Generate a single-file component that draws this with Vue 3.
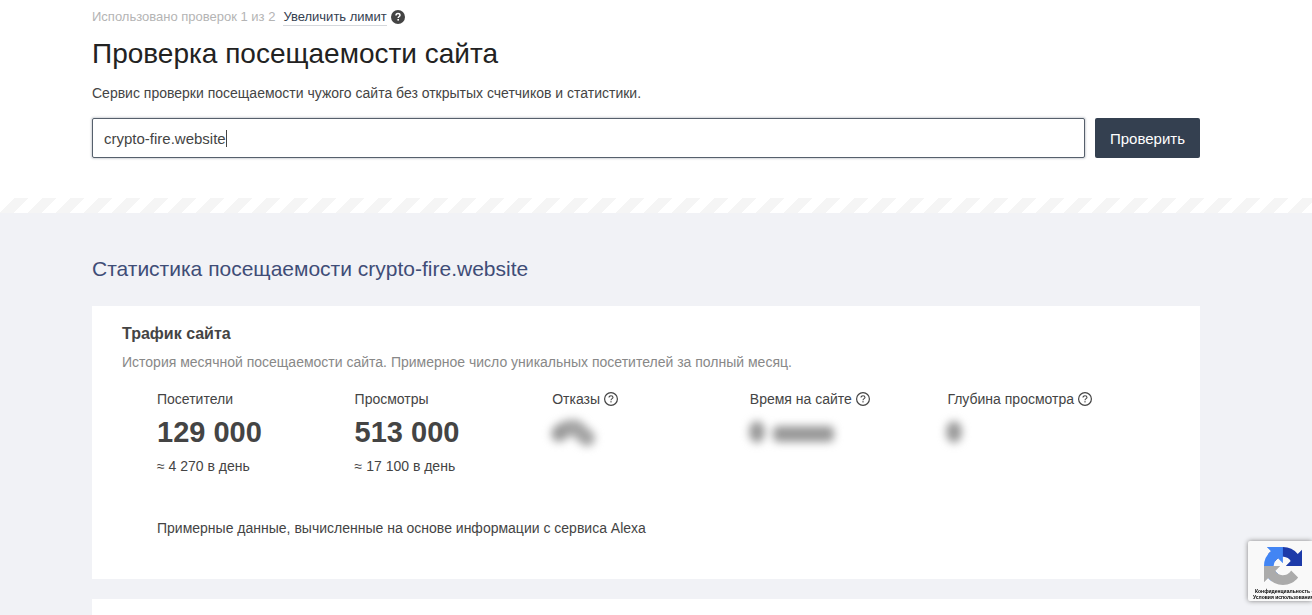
<script setup>
import { ref, onMounted } from 'vue'

const domain = ref('crypto-fire.website')
const checked = ref('crypto-fire.website')
const input = ref(null)

const stats = [
  { label: 'Посетители', value: '129 000', perDay: '≈ 4 270 в день' },
  { label: 'Просмотры', value: '513 000', perDay: '≈ 17 100 в день' },
  { label: 'Отказы', hidden: 'percent' },
  { label: 'Время на сайте', hidden: 'time' },
  { label: 'Глубина просмотра', hidden: 'depth' }
]

const check = () => {
  checked.value = domain.value
}

onMounted(() => {
  input.value.focus()
})
</script>

<template>
  <div class="page">
    <header class="top">
      <div class="limit">
        <span>Использовано проверок 1 из 2</span>
        <a href="#" class="limit-link">Увеличить лимит</a>
        <svg class="limit-help" viewBox="0 0 14 14" aria-hidden="true">
          <circle cx="7" cy="7" r="7" fill="#444" />
          <path d="M5 5.5C5 4.3 5.8 3.6 7 3.6S9 4.3 9 5.3C9 6.5 7.2 6.5 7.2 8" fill="none" stroke="#fff" stroke-width="1.5" />
          <rect x="6.4" y="9" width="1.6" height="1.6" fill="#fff" />
        </svg>
      </div>
      <h1>Проверка посещаемости сайта</h1>
      <p class="lead">Сервис проверки посещаемости чужого сайта без открытых счетчиков и статистики.</p>
      <form class="search" @submit.prevent="check">
        <div class="field">
          <input ref="input" v-model="domain" type="text" aria-label="Адрес сайта" spellcheck="false" />
          <i class="caret"></i>
        </div>
        <button type="submit">Проверить</button>
      </form>
    </header>
    <div class="stripes"></div>

    <main class="results">
      <h2>Статистика посещаемости {{ checked }}</h2>
      <section class="card">
        <h3>Трафик сайта</h3>
        <p class="hint">История месячной посещаемости сайта. Примерное число уникальных посетителей за полный месяц.</p>
        <div class="stats">
          <div v-for="item in stats" :key="item.label" class="stat">
            <div class="stat-label">
              <span>{{ item.label }}</span>
              <svg v-if="item.hidden" class="help" viewBox="0 0 14 14" aria-hidden="true">
                <circle cx="7" cy="7" r="6.4" fill="none" stroke="#444" stroke-width="1.2" />
                <path d="M5 5.6C5 4.4 5.9 3.8 7 3.8S9 4.4 9 5.4C9 6.6 7 6.7 7 8.2" fill="none" stroke="#444" stroke-width="1.1" />
                <rect x="6.4" y="9.2" width="1.2" height="1.2" fill="#444" />
              </svg>
            </div>
            <template v-if="!item.hidden">
              <div class="stat-value">{{ item.value }}</div>
              <div class="stat-day">{{ item.perDay }}</div>
            </template>
            <svg v-else class="blurred" viewBox="0 0 100 40" aria-hidden="true">
              <template v-if="item.hidden === 'percent'">
                <path d="M7 21Q15 13 24 15L35 25" />
                <ellipse cx="8" cy="19" rx="7" ry="8" />
              </template>
              <template v-else>
                <ellipse cx="7" cy="19" rx="8" ry="11" />
                <rect v-if="item.hidden === 'time'" x="23" y="13" width="61" height="16" rx="5" />
              </template>
            </svg>
          </div>
        </div>
        <p class="note">Примерные данные, вычисленные на основе информации с сервиса Alexa</p>
      </section>
      <section class="card card-next"></section>
    </main>

    <aside class="captcha">
      <svg class="captcha-logo" viewBox="0 0 64 64" aria-hidden="true">
        <path d="M64 31.955a33.3 33.3 0 0 0-.02-1.37V4.687l-7.16 7.16A31.9 31.9 0 0 0 32.05.098c-10.4 0-19.64 4.957-25.48 12.635l11.737 11.86a15.55 15.55 0 0 1 4.754-5.334c2.05-1.6 4.952-2.906 8.968-2.906.485 0 .86.057 1.135.163 4.976.393 9.288 3.14 11.828 7.124l-8.307 8.307L64 31.953" fill="#1c3aa9" />
        <path d="M31.862.094a33 33 0 0 0-1.37.024H4.594l7.16 7.16A31.9 31.9 0 0 0 .005 32.05c0 10.4 4.957 19.64 12.635 25.48l11.86-11.737a15.55 15.55 0 0 1-5.334-4.754c-1.6-2.05-2.906-4.952-2.906-8.968 0-.485.057-.86.163-1.135.393-4.976 3.14-9.288 7.124-11.828l8.307 8.307L31.86.097" fill="#4285f4" />
        <path d="M.001 32.045c.001.46.01.92.024 1.37v25.898l7.16-7.16A31.9 31.9 0 0 0 31.957 63.9c10.4 0 19.64-4.957 25.48-12.635L45.7 39.407a15.55 15.55 0 0 1-4.754 5.334c-2.05 1.6-4.952 2.906-8.968 2.906-.485 0-.86-.057-1.135-.163-4.976-.393-9.288-3.14-11.828-7.124l8.307-8.307L.004 32.046" fill="#ababab" />
      </svg>
      <div class="captcha-links">
        <span><a href="#">Конфиденциальность</a> -</span>
        <a href="#">Условия использования</a>
      </div>
    </aside>
  </div>
</template>

<style>
body {
  background: #f1f2f6;
}
</style>

<style scoped>
.page {
  font-family: "Liberation Sans", Arial, sans-serif;
  font-size: 14px;
  line-height: 20px;
  color: #444;
}

h1, h2, h3, p {
  margin: 0;
}

.top {
  padding: 9px 112px 40px 92px;
  background: #fff;
}

.limit {
  display: flex;
  align-items: flex-start;
  height: 17px;
  font-size: 13px;
  line-height: 16px;
  color: #b4b4b4;
}

.limit-link {
  margin: 0 4px 0 8px;
  color: #344050;
  text-decoration: none;
  border-bottom: 1px solid #d5d8dc;
}

.limit-help {
  width: 14px;
  height: 14px;
  margin-top: 1px;
}

h1 {
  margin-top: 8px;
  font-size: 28px;
  line-height: 40px;
  font-weight: 400;
  color: #222;
}

.lead {
  margin-top: 9px;
}

.search {
  display: flex;
  gap: 10px;
  margin-top: 15px;
}

.field {
  position: relative;
  flex: 1;
  min-width: 0;
}

.field input {
  display: block;
  width: 100%;
  height: 40px;
  box-sizing: border-box;
  padding: 0 11px;
  border: 1px solid #56606c;
  border-radius: 2px;
  box-shadow: 0 0 2px 1px #d3d6da;
  outline: none;
  font: inherit;
  font-size: 15px;
  color: #444;
  caret-color: transparent;
}

.caret {
  position: absolute;
  top: 12px;
  left: 134px;
  width: 1px;
  height: 17px;
  background: #444;
}

.search button {
  padding: 2px 15px 0;
  border: 0;
  border-radius: 2px;
  background: #344050;
  font: inherit;
  font-size: 15px;
  color: #fff;
  cursor: pointer;
}

.stripes {
  height: 15px;
  background: linear-gradient(135deg, #fff 25%, #f5f5f5 25%, #f5f5f5 50%, #fff 50%, #fff 75%, #f5f5f5 75%) 0 0 / 28px 28px;
}

.results {
  padding: 42px 112px 0 92px;
}

h2 {
  margin-bottom: 23px;
  font-size: 21px;
  line-height: 28px;
  font-weight: 400;
  color: #3f4d77;
}

.card {
  margin-bottom: 20px;
  padding: 18px 30px 41px;
  background: #fff;
}

.card-next {
  margin-bottom: 0;
  padding: 8px 30px;
}

h3 {
  font-size: 16px;
  line-height: 20px;
}

.hint {
  margin-top: 8px;
  color: #888;
}

.stats {
  display: grid;
  grid-template-columns: repeat(5, 1fr);
  margin: 17px 25px 0 35px;
}

.stat-label {
  display: flex;
  align-items: center;
  gap: 4px;
}

.help {
  width: 14px;
  height: 14px;
}

.stat-value {
  margin-top: 5px;
  font-size: 29px;
  line-height: 36px;
  font-weight: 700;
}

.stat-day {
  margin-top: 6px;
}

.blurred {
  display: block;
  width: 100px;
  height: 40px;
  margin-top: 4px;
  overflow: visible;
  filter: blur(4px);
  fill: #999;
}

.blurred path {
  fill: none;
  stroke: #a4a4a4;
  stroke-width: 16px;
  stroke-linecap: round;
}

.note {
  margin: 42px 35px 0;
}

.captcha {
  position: fixed;
  right: 0;
  bottom: 14px;
  width: 64px;
  height: 60px;
  box-sizing: border-box;
  padding-top: 6px;
  overflow: hidden;
  border-radius: 2px 0 0 2px;
  background: #f9f9f9;
  box-shadow: 0 0 5px #808080;
}

.captcha-logo {
  display: block;
  width: 38px;
  height: 38px;
  margin-left: 16px;
}

.captcha-links {
  display: flex;
  flex-direction: column;
  margin: 3px 0 0 5px;
  font-size: 5px;
  line-height: 6px;
  font-weight: 700;
  white-space: nowrap;
  color: #000;
}

.captcha-links span {
  padding-left: 2px;
}

.captcha-links a {
  color: #000;
  text-decoration: none;
}
</style>
